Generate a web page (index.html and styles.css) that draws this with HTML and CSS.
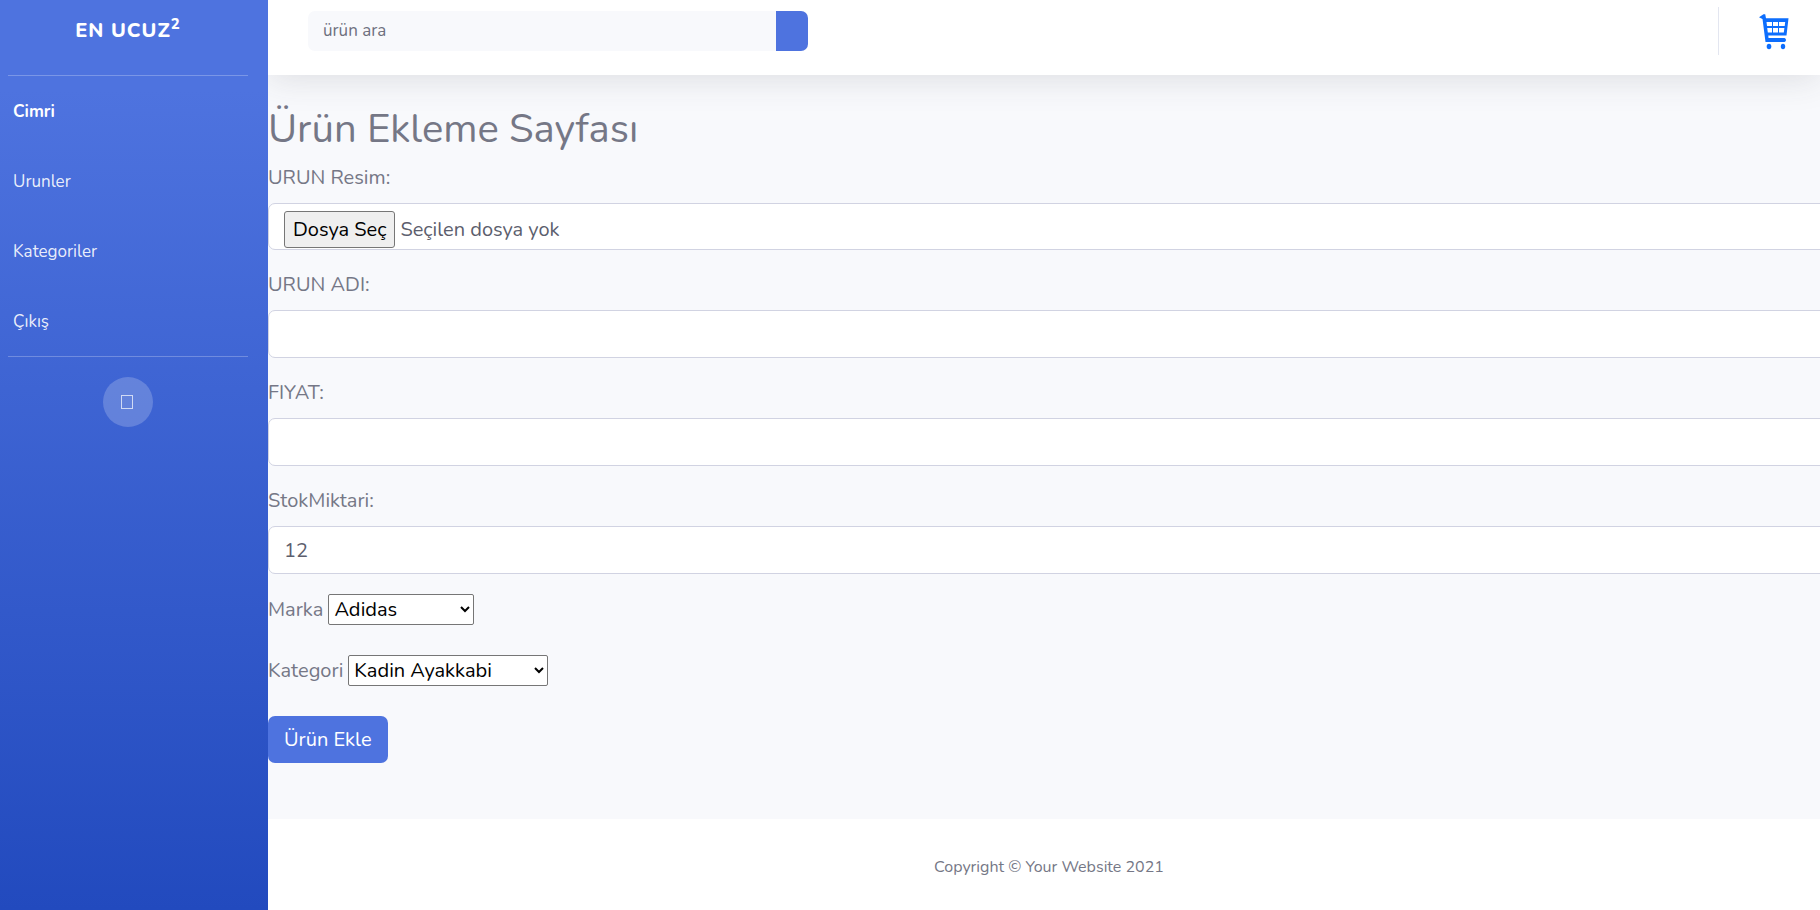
FILE: index.html
```html
<!DOCTYPE html>
<html lang="tr">
<head>
<meta charset="utf-8">
<title>Ürün Ekleme Sayfası</title>
<link rel="stylesheet" href="styles.css">
</head>
<body>
<div class="wrapper">
  <nav class="sidebar">
    <a class="brand" href="#">EN UCUZ<sup>2</sup></a>
    <hr class="divider">
    <ul class="nav">
      <li><a class="nav-link active" href="#">Cimri</a></li>
      <li><a class="nav-link" href="#">Urunler</a></li>
      <li><a class="nav-link" href="#">Kategoriler</a></li>
      <li><a class="nav-link" href="#">Çıkış</a></li>
    </ul>
    <hr class="divider">
    <button class="toggle" type="button" aria-label="Menü"><span class="toggle-glyph"></span></button>
  </nav>
  <div class="content">
    <header class="topbar">
      <form class="search">
        <input class="search-input" type="text" placeholder="ürün ara" aria-label="ürün ara">
        <button class="search-button" type="button" aria-label="Ara"></button>
      </form>
      <div class="topbar-right">
        <a class="cart" href="#" aria-label="Sepet">
          <svg width="30" height="36" viewBox="0 0 30 36">
            <path d="M0 3.200L4.500 0.300L6.200 0.300L7 4.300L29.500 4.300L27.500 21.500L9.300 21.500L9.500 24H25.500Q27 24.500 27 26T25.500 28H6.500L3.500 5Z" fill="#0d6efd"/>
            <g fill="#fff">
              <path d="M7.500 8H13V12H8ZM14 8H19V12H14ZM20 8H26.200L25.700 12H20Z"/>
              <path d="M8.200 14H13V18.500H8.800ZM14 14H19V18.500H14ZM20 14H25.400L24.800 18.500H20Z"/>
            </g>
            <ellipse cx="10" cy="32.500" rx="2.300" ry="2.800" fill="#0d6efd"/>
            <ellipse cx="24" cy="32.500" rx="2.200" ry="2.800" fill="#0d6efd"/>
          </svg>
        </a>
      </div>
    </header>
    <main class="main">
      <h1 class="title">Ürün Ekleme Sayfası</h1>
      <form class="form">
        <div class="group">
          <label for="resim">URUN Resim:</label>
          <div class="control file">
            <input class="file-input" id="resim" type="file">
            <span class="file-button">Dosya Seç</span>
            <span>Seçilen dosya yok</span>
          </div>
        </div>
        <div class="group">
          <label for="adi">URUN ADI:</label>
          <input class="control" id="adi" type="text">
        </div>
        <div class="group">
          <label for="fiyat">FIYAT:</label>
          <input class="control" id="fiyat" type="text">
        </div>
        <div class="group">
          <label for="stok">StokMiktari:</label>
          <input class="control" id="stok" type="text" value="12">
        </div>
        <div class="row">
          <label for="marka">Marka</label>
          <select class="select" id="marka"><option>Adidas</option></select>
        </div>
        <div class="row">
          <label for="kategori">Kategori</label>
          <select class="select wide" id="kategori"><option>Kadin Ayakkabi</option></select>
        </div>
        <button class="submit" type="button">Ürün Ekle</button>
      </form>
    </main>
    <footer class="footer">Copyright © Your Website 2021</footer>
  </div>
</div>
</body>
</html>
```
FILE: styles.css
```css
* {
  box-sizing: border-box;
}

body {
  margin: 0;
  font-family: Nunito, Lato, "Open Sans", sans-serif;
  font-size: 20px;
  line-height: 30px;
  color: #757786;
}

input,
select,
button {
  font: inherit;
}

.wrapper {
  display: flex;
  min-height: 100vh;
}

.sidebar {
  flex: 0 0 268px;
  display: flex;
  flex-direction: column;
  padding: 0 20px 0 8px;
  background: linear-gradient(180deg, #4e73df 10%, #224abe 100%);
}

.brand {
  padding: 16px 0 29px;
  color: #fff;
  font-weight: 800;
  letter-spacing: 1px;
  text-align: center;
  text-decoration: none;
}

.brand sup {
  font-size: 15px;
  line-height: 0;
}

.divider {
  width: 100%;
  margin: 0;
  border: 0;
  border-top: 1px solid rgba(255, 255, 255, 0.25);
}

.nav {
  margin: 0;
  padding: 0;
  list-style: none;
}

.nav-link {
  display: block;
  padding: 21px 5px 19px;
  color: rgba(255, 255, 255, 0.9);
  font-size: 17px;
  text-decoration: none;
}

.nav-link.active {
  color: #fff;
  font-weight: 700;
}

.toggle {
  display: flex;
  align-items: center;
  justify-content: center;
  align-self: center;
  width: 50px;
  height: 50px;
  margin-top: 20px;
  padding: 0 2px 0 0;
  border: 0;
  border-radius: 50%;
  background: rgba(255, 255, 255, 0.2);
}

.toggle-glyph {
  width: 12px;
  height: 14px;
  border: 1px solid rgba(255, 255, 255, 0.7);
}

.content {
  flex: 1;
  min-width: 0;
  display: flex;
  flex-direction: column;
  overflow: hidden;
  background: #f8f9fc;
}

.topbar {
  display: flex;
  align-items: flex-start;
  justify-content: space-between;
  height: 75px;
  padding: 7px 31px 0 40px;
  background: #fff;
  box-shadow: 0 3px 35px rgba(58, 59, 69, 0.15);
}

.search {
  display: flex;
  width: 500px;
  height: 40px;
  margin-top: 4px;
}

.search-input {
  flex: 1;
  min-width: 0;
  padding: 0 15px;
  border: 0;
  border-radius: 7px 0 0 7px;
  background: #f8f9fc;
  color: #6e707e;
  font-size: 17px;
}

.search-input::placeholder {
  color: #6e707e;
}

.search-button {
  width: 32px;
  border: 0;
  border-radius: 0 7px 7px 0;
  background: #4e73df;
}

.topbar-right {
  height: 48px;
  padding: 7px 0 0 40px;
  border-left: 1px solid #e3e6f0;
}

.cart {
  display: block;
}

.cart svg {
  display: block;
}

.main {
  flex: 1;
  padding-top: 30px;
}

.title {
  margin: 0 0 10px;
  font-size: 40px;
  font-weight: 400;
  line-height: 48px;
}

.group {
  display: flex;
  flex-direction: column;
  gap: 10px;
  margin: 0 -20px 20px 0;
}

.control {
  width: 100%;
  height: 48px;
  padding: 0 15px;
  border: 1px solid #d1d3e2;
  border-radius: 7px;
  background: #fff;
  color: #5c5e6d;
}

.file {
  position: relative;
  display: flex;
  align-items: center;
  gap: 5px;
  height: 47px;
  padding-top: 6px;
  line-height: 35px;
}

.file-input {
  position: absolute;
  inset: 0;
  opacity: 0;
}

.file-button {
  padding: 0 8px;
  border: 1px solid #767676;
  border-radius: 3px;
  background: #efefef;
  color: #000;
}

.row {
  display: flex;
  align-items: center;
  gap: 5px;
  margin-bottom: 30px;
}

.select {
  width: 146px;
  height: 31px;
  padding: 0 1px;
  border: 1px solid #767676;
  border-radius: 2px;
  background-color: #fff;
  color: #000;
}

.select.wide {
  width: 200px;
}

.submit {
  height: 47px;
  padding: 0 16px;
  border: 0;
  border-radius: 7px;
  background: #4e73df;
  color: #fff;
}

.footer {
  padding: 40px 0 35px 10px;
  background: #fff;
  font-size: 16px;
  line-height: 16px;
  text-align: center;
}
```
